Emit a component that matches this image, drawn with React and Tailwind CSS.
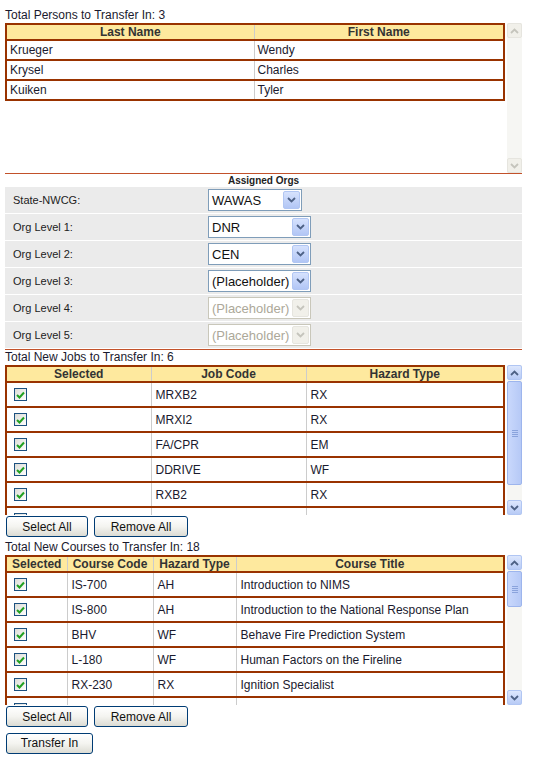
import React from 'react'

const persons = [
  { last: 'Krueger', first: 'Wendy' },
  { last: 'Krysel', first: 'Charles' },
  { last: 'Kuiken', first: 'Tyler' },
]

const orgs = [
  { label: 'State-NWCG:', value: 'WAWAS', w: 'w-[94px]' },
  { label: 'Org Level 1:', value: 'DNR', w: 'w-[103px]' },
  { label: 'Org Level 2:', value: 'CEN', w: 'w-[103px]' },
  { label: 'Org Level 3:', value: '(Placeholder)', w: 'w-[103px]' },
  { label: 'Org Level 4:', value: '(Placeholder)', w: 'w-[103px]', disabled: true },
  { label: 'Org Level 5:', value: '(Placeholder)', w: 'w-[103px]', disabled: true },
]

const jobs = [
  { code: 'MRXB2', hazard: 'RX' },
  { code: 'MRXI2', hazard: 'RX' },
  { code: 'FA/CPR', hazard: 'EM' },
  { code: 'DDRIVE', hazard: 'WF' },
  { code: 'RXB2', hazard: 'RX' },
  { code: 'FFI1', hazard: 'WF' },
]

const courses = [
  { code: 'IS-700', hazard: 'AH', title: 'Introduction to NIMS' },
  { code: 'IS-800', hazard: 'AH', title: 'Introduction to the National Response Plan' },
  { code: 'BHV', hazard: 'WF', title: 'Behave Fire Prediction System' },
  { code: 'L-180', hazard: 'WF', title: 'Human Factors on the Fireline' },
  { code: 'RX-230', hazard: 'RX', title: 'Ignition Specialist' },
  { code: 'RX-340', hazard: 'RX', title: 'Introduction to Fire Effects' },
]

const Chevron = ({ up, color }) => (
  <svg width="9" height="6" viewBox="0 0 9 6">
    <path d={up ? 'M1 5 L4.5 1.5 L8 5' : 'M1 1 L4.5 4.5 L8 1'} fill="none" stroke={color} strokeWidth="1.8" />
  </svg>
)

const ScrollBar = ({ active, thumbTop, thumbHeight }) => {
  const btn = active
    ? 'border border-[#b1c6f3] bg-gradient-to-b from-[#dde7fd] to-[#b8cbf6] rounded-[2px]'
    : 'border border-[#e6e5df] bg-[#f1f0ea] rounded-[2px]'
  const arrow = active ? '#4d6185' : '#c5c4bc'
  return (
    <div className="w-[15px] h-[150px] bg-[#f6f6f3] flex flex-col relative">
      <div className={`h-[15px] w-[15px] flex items-center justify-center ${btn}`}>
        <Chevron up color={arrow} />
      </div>
      <div className="flex-1" />
      <div className={`h-[15px] w-[15px] flex items-center justify-center ${btn}`}>
        <Chevron color={arrow} />
      </div>
      {active && (
        <div
          className="absolute left-0 w-[15px] border border-[#9db5ed] rounded-[2px] bg-gradient-to-r from-[#c9d8fc] to-[#b6c9f6] flex flex-col items-center justify-center gap-[1px]"
          style={{ top: thumbTop, height: thumbHeight }}
        >
          <div className="w-[6px] h-px bg-[#8aa3dc]" />
          <div className="w-[6px] h-px bg-[#8aa3dc]" />
          <div className="w-[6px] h-px bg-[#8aa3dc]" />
          <div className="w-[6px] h-px bg-[#8aa3dc]" />
        </div>
      )}
    </div>
  )
}

const Check = () => (
  <div className="w-[13px] h-[13px] border border-[#1c5180] bg-gradient-to-br from-[#dcdcd7] to-white flex items-center justify-center">
    <svg width="9" height="8" viewBox="0 0 9 8">
      <path d="M1 4 L3.5 6.5 L8 1.5" fill="none" stroke="#21a121" strokeWidth="2" />
    </svg>
  </div>
)

const Button = ({ children, w }) => (
  <button className={`${w} h-[21px] border border-[#003c74] rounded-[3px] bg-gradient-to-b from-white via-[#f4f4f0] to-[#dcdcd4] text-[12px] text-[#111] leading-none`}>
    {children}
  </button>
)

const Select = ({ value, w, disabled }) => (
  <div className={`${w} h-[22px] flex items-center border ${disabled ? 'border-[#c9c7ba] text-[#aca899]' : 'border-[#7f9db9] text-[#111]'} bg-white`}>
    <span className="flex-1 min-w-0 pl-[3px] text-[13px] leading-none whitespace-nowrap">{value}</span>
    <div className={`w-[17px] h-[18px] shrink-0 mr-px flex items-center justify-center rounded-[2px] ${disabled ? 'bg-[#f1f0ea] border border-[#e6e5df]' : 'bg-gradient-to-b from-[#d6e2fd] to-[#b2c6f5] border border-[#b1c6f3]'}`}>
      <Chevron color={disabled ? '#c5c4bc' : '#4d6185'} />
    </div>
  </div>
)

const th = 'h-[16px] p-0 text-[12px] font-bold text-[#333] leading-none border-b-2 border-[#993300]'

export default function App() {
  return (
    <div className="w-[540px] h-[758px] bg-white pl-[5px] pt-[8px] font-['Liberation_Sans',Arial,sans-serif] text-[#1a1a2e] overflow-hidden">
      <div className="text-[12px] leading-[15px]">Total Persons to Transfer In: 3</div>

      <div className="flex w-[517px]">
        <div className="w-[502px] h-[150px] overflow-hidden">
          <table className="w-[500px] border-collapse border-2 border-[#993300]">
            <thead>
              <tr className="bg-[#fee99e]">
                <th className={`${th} w-[248px] border-r border-r-[#ccc]`}>Last Name</th>
                <th className={th}>First Name</th>
              </tr>
            </thead>
            <tbody>
              {persons.map(p => (
                <tr key={p.last} className="h-[20px] border-b-2 border-[#993300] text-[12px]">
                  <td className="pl-[3px] border-r border-[#ccc]">{p.last}</td>
                  <td className="pl-[3px]">{p.first}</td>
                </tr>
              ))}
            </tbody>
          </table>
        </div>
        <ScrollBar />
      </div>

      <div className="w-[517px] border-t border-[#c2512a]">
        <div className="h-[13px] text-center text-[10px] font-bold leading-[13px] text-[#222]">Assigned Orgs</div>
        {orgs.map(o => (
          <div key={o.label} className="h-[26px] mb-px bg-[#ebebeb] flex items-center">
            <div className="w-[203px] pl-[8px] text-[11px] text-[#222]">{o.label}</div>
            <Select value={o.value} w={o.w} disabled={o.disabled} />
          </div>
        ))}
      </div>

      <div className="w-[517px] border-t border-[#c2512a] text-[12px] leading-[15px]">Total New Jobs to Transfer In: 6</div>

      <div className="flex w-[517px]">
        <div className="w-[502px] h-[150px] overflow-hidden">
          <table className="w-[500px] border-collapse border-2 border-[#993300]">
            <thead>
              <tr className="bg-[#fee99e]">
                <th className={`${th} w-[145px] border-r border-r-[#ccc]`}>Selected</th>
                <th className={`${th} w-[155px] border-r border-r-[#ccc]`}>Job Code</th>
                <th className={th}>Hazard Type</th>
              </tr>
            </thead>
            <tbody>
              {jobs.map(j => (
                <tr key={j.code} className="h-[25px] border-b-2 border-[#993300] text-[12px]">
                  <td className="pl-[7px] border-r border-[#ccc]"><Check /></td>
                  <td className="pl-[4px] border-r border-[#ccc]">{j.code}</td>
                  <td className="pl-[4px]">{j.hazard}</td>
                </tr>
              ))}
            </tbody>
          </table>
        </div>
        <ScrollBar active thumbTop={16} thumbHeight={104} />
      </div>

      <div className="flex gap-[6px] pl-px mt-px">
        <Button w="w-[82px]">Select All</Button>
        <Button w="w-[94px]">Remove All</Button>
      </div>

      <div className="text-[12px] leading-[16px] mt-[2px]">Total New Courses to Transfer In: 18</div>

      <div className="flex w-[517px]">
        <div className="w-[502px] h-[150px] overflow-hidden">
          <table className="w-[500px] border-collapse border-2 border-[#993300]">
            <thead>
              <tr className="bg-[#fee99e]">
                <th className={`${th} w-[61px] border-r border-r-[#ccc]`}>Selected</th>
                <th className={`${th} w-[86px] border-r border-r-[#ccc]`}>Course Code</th>
                <th className={`${th} w-[83px] border-r border-r-[#ccc]`}>Hazard Type</th>
                <th className={th}>Course Title</th>
              </tr>
            </thead>
            <tbody>
              {courses.map(c => (
                <tr key={c.code} className="h-[25px] border-b-2 border-[#993300] text-[12px]">
                  <td className="pl-[7px] border-r border-[#ccc]"><Check /></td>
                  <td className="pl-[4px] border-r border-[#ccc]">{c.code}</td>
                  <td className="pl-[4px] border-r border-[#ccc]">{c.hazard}</td>
                  <td className="pl-[4px] whitespace-nowrap">{c.title}</td>
                </tr>
              ))}
            </tbody>
          </table>
        </div>
        <ScrollBar active thumbTop={16} thumbHeight={36} />
      </div>

      <div className="flex gap-[6px] pl-px mt-px">
        <Button w="w-[82px]">Select All</Button>
        <Button w="w-[94px]">Remove All</Button>
      </div>
      <div className="pl-px mt-[3px]">
        <Button w="w-[87px]">Transfer In</Button>
      </div>
    </div>
  )
}
